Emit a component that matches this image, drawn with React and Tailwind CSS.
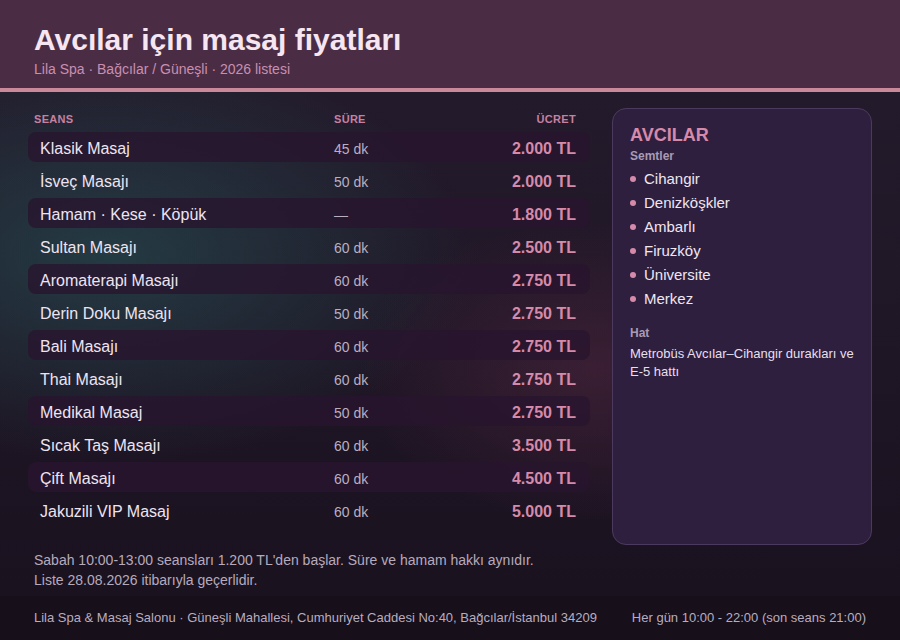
const rows = [
  { name: "Klasik Masaj", dur: "45 dk", price: "2.000 TL" },
  { name: "İsveç Masajı", dur: "50 dk", price: "2.000 TL" },
  { name: "Hamam · Kese · Köpük", dur: "—", price: "1.800 TL" },
  { name: "Sultan Masajı", dur: "60 dk", price: "2.500 TL" },
  { name: "Aromaterapi Masajı", dur: "60 dk", price: "2.750 TL" },
  { name: "Derin Doku Masajı", dur: "50 dk", price: "2.750 TL" },
  { name: "Bali Masajı", dur: "60 dk", price: "2.750 TL" },
  { name: "Thai Masajı", dur: "60 dk", price: "2.750 TL" },
  { name: "Medikal Masaj", dur: "50 dk", price: "2.750 TL" },
  { name: "Sıcak Taş Masajı", dur: "60 dk", price: "3.500 TL" },
  { name: "Çift Masajı", dur: "60 dk", price: "4.500 TL" },
  { name: "Jakuzili VIP Masaj", dur: "60 dk", price: "5.000 TL" },
];

const districts = ["Cihangir", "Denizköşkler", "Ambarlı", "Firuzköy", "Üniversite", "Merkez"];

export default function App() {
  return (
    <div className="w-[900px] h-[640px] flex flex-col overflow-hidden bg-[#1b1220] font-['Liberation_Sans',Arial,sans-serif]">
      <header className="h-[92px] shrink-0 bg-[#4a2d45] border-b-4 border-[#c9899a] px-[34px] pt-[22px]">
        <h1 className="text-[30px] font-bold leading-[36px] text-[#f6e6f2]">Avcılar için masaj fiyatları</h1>
        <p className="text-[14px] leading-[20px] mt-[1px] text-[#c98fb0]">Lila Spa · Bağcılar / Güneşli · 2026 listesi</p>
      </header>

      <main className="flex-1 flex flex-col px-[28px] pt-[16px] bg-[radial-gradient(ellipse_55%_55%_at_12%_32%,rgba(38,82,86,0.6),transparent_75%),radial-gradient(ellipse_35%_40%_at_66%_55%,rgba(110,48,78,0.35),transparent_75%),linear-gradient(180deg,#231a2b_0%,#1b1220_100%)]">
        <div className="flex gap-[22px]">
          <section className="w-[562px]">
            <div className="flex items-center h-[22px] pl-[6px] pr-[14px] text-[11px] font-bold tracking-[0.3px] text-[#c680a2]">
              <span className="w-[300px]">SEANS</span>
              <span className="flex-1">SÜRE</span>
              <span>ÜCRET</span>
            </div>
            <div className="flex flex-col gap-[3px] mt-[2px]">
              {rows.map((r, i) => (
                <div
                  key={r.name}
                  className={
                    i % 2 === 0
                      ? "flex items-center h-[30px] pt-[4px] pl-[12px] pr-[14px] rounded-[8px] bg-[rgba(40,20,46,0.78)]"
                      : "flex items-center h-[30px] pt-[4px] pl-[12px] pr-[14px] rounded-[8px]"
                  }
                >
                  <span className="w-[294px] text-[16px] text-[#eee4f1]">{r.name}</span>
                  <span className="flex-1 text-[14px] text-[#b9afc1]">{r.dur}</span>
                  <span className="text-[16px] font-bold text-[#d68aaa]">{r.price}</span>
                </div>
              ))}
            </div>
          </section>

          <aside className="w-[260px] h-[437px] rounded-[14px] border border-[#4c3a5e] bg-[#2e1f3f] px-[17px] pt-[15px]">
            <h2 className="text-[18px] font-bold leading-[22px] text-[#d68aaa]">AVCILAR</h2>
            <h3 className="text-[12px] font-bold leading-[16px] mt-[2px] text-[#a99bb3]">Semtler</h3>
            <ul className="mt-[3px] flex flex-col">
              {districts.map((d) => (
                <li key={d} className="flex items-center gap-[8px] h-[24px] text-[15px] text-[#efe6f2]">
                  <span className="w-[6px] h-[6px] rounded-full bg-[#d68aaa]" />
                  {d}
                </li>
              ))}
            </ul>
            <h3 className="text-[12px] font-bold leading-[16px] mt-[14px] text-[#a99bb3]">Hat</h3>
            <p className="text-[13px] leading-[18px] mt-[4px] text-[#e8dfec]">Metrobüs Avcılar–Cihangir durakları ve E-5 hattı</p>
          </aside>
        </div>

        <div className="mt-[5px] pl-[6px] text-[14px] leading-[20px] text-[#b6aabd]">
          <p>Sabah 10:00-13:00 seansları 1.200 TL'den başlar. Süre ve hamam hakkı aynıdır.</p>
          <p>Liste 28.08.2026 itibarıyla geçerlidir.</p>
        </div>
      </main>

      <footer className="h-[44px] shrink-0 bg-[#170f1a] px-[34px] flex items-center justify-between text-[13px] text-[#b8adc0]">
        <span>Lila Spa &amp; Masaj Salonu · Güneşli Mahallesi, Cumhuriyet Caddesi No:40, Bağcılar/İstanbul 34209</span>
        <span>Her gün 10:00 - 22:00 (son seans 21:00)</span>
      </footer>
    </div>
  );
}
